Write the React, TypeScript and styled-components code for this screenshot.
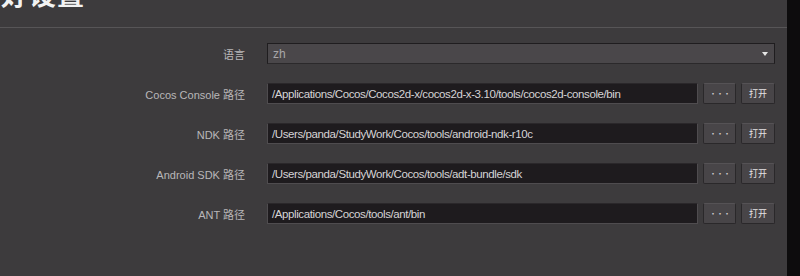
import React from 'react';
import styled, { createGlobalStyle } from 'styled-components';

const GlobalStyle = createGlobalStyle`
  html, body {
    margin: 0;
    padding: 0;
    background: #3d3b3d;
  }
  body {
    font-family: 'Liberation Sans', 'Noto Sans CJK SC', sans-serif;
  }
`;

const Window = styled.div`
  display: flex;
  width: 800px;
  height: 276px;
  overflow: hidden;
  background: #3d3b3d;
`;

const Main = styled.div`
  flex: 1;
  display: flex;
  flex-direction: column;
`;

const Edge = styled.div`
  width: 13px;
  background: #0d0c0d;
`;

const Header = styled.div`
  height: 27px;
  border-bottom: 1px solid #575557;
  overflow: hidden;
`;

const Title = styled.h1`
  margin: -23px 0 0 -27px;
  font-size: 27px;
  line-height: 34px;
  font-weight: bold;
  color: #f2f2f2;
  font-family: 'Noto Sans CJK SC', sans-serif;
  letter-spacing: 1px;
  white-space: nowrap;
`;

const Form = styled.div`
  display: grid;
  grid-template-columns: 262px 431px 33px 34px;
  column-gap: 5px;
  row-gap: 19px;
  grid-auto-rows: 21px;
  padding-top: 15px;
`;

const Label = styled.div`
  display: flex;
  align-items: center;
  justify-content: flex-end;
  padding-right: 17px;
  font-size: 11px;
  color: #b9b7b9;
  white-space: nowrap;
`;

const PathInput = styled.div`
  display: flex;
  align-items: center;
  padding-left: 4px;
  box-sizing: border-box;
  background: #1e1b1e;
  border: 1px solid #4f4c4f;
  border-top-color: #2a272a;
  font-size: 11.5px;
  letter-spacing: -0.4px;
  color: #d6d4d6;
  white-space: nowrap;
  overflow: hidden;
`;

const Select = styled.div`
  grid-column: 2 / span 3;
  display: flex;
  align-items: center;
  justify-content: space-between;
  padding: 0 6px 0 5px;
  box-sizing: border-box;
  background: #4a474a;
  border: 1px solid #1f1d1f;
  border-bottom-color: #2b292b;
  font-size: 12px;
  color: #a9a7a9;
`;

const Arrow = styled.span`
  width: 0;
  height: 0;
  border-left: 3px solid transparent;
  border-right: 3px solid transparent;
  border-top: 4px solid #e6e6e6;
`;

const Button = styled.div`
  display: flex;
  align-items: center;
  justify-content: center;
  box-sizing: border-box;
  background: #484548;
  border: 1px solid #2a282a;
  border-top-color: #555255;
  border-radius: 2px;
  font-size: 9px;
  color: #e4e2e4;
  font-family: 'Noto Sans CJK SC', sans-serif;
  white-space: nowrap;
`;

const Dots = styled.span`
  font-size: 8px;
  letter-spacing: -1px;
  color: #d0ced0;
`;

const rows = [
  { label: 'Cocos Console 路径', value: '/Applications/Cocos/Cocos2d-x/cocos2d-x-3.10/tools/cocos2d-console/bin' },
  { label: 'NDK 路径', value: '/Users/panda/StudyWork/Cocos/tools/android-ndk-r10c' },
  { label: 'Android SDK 路径', value: '/Users/panda/StudyWork/Cocos/tools/adt-bundle/sdk' },
  { label: 'ANT 路径', value: '/Applications/Cocos/tools/ant/bin' },
];

export default function App() {
  return (
    <Window>
      <GlobalStyle />
      <Main>
        <Header>
          <Title>偏好设置</Title>
        </Header>
        <Form>
          <Label>语言</Label>
          <Select>
            <span>zh</span>
            <Arrow />
          </Select>
          {rows.map((r) => (
            <React.Fragment key={r.label}>
              <Label>{r.label}</Label>
              <PathInput>{r.value}</PathInput>
              <Button>
                <Dots>···</Dots>
              </Button>
              <Button>打开</Button>
            </React.Fragment>
          ))}
        </Form>
      </Main>
      <Edge />
    </Window>
  );
}
